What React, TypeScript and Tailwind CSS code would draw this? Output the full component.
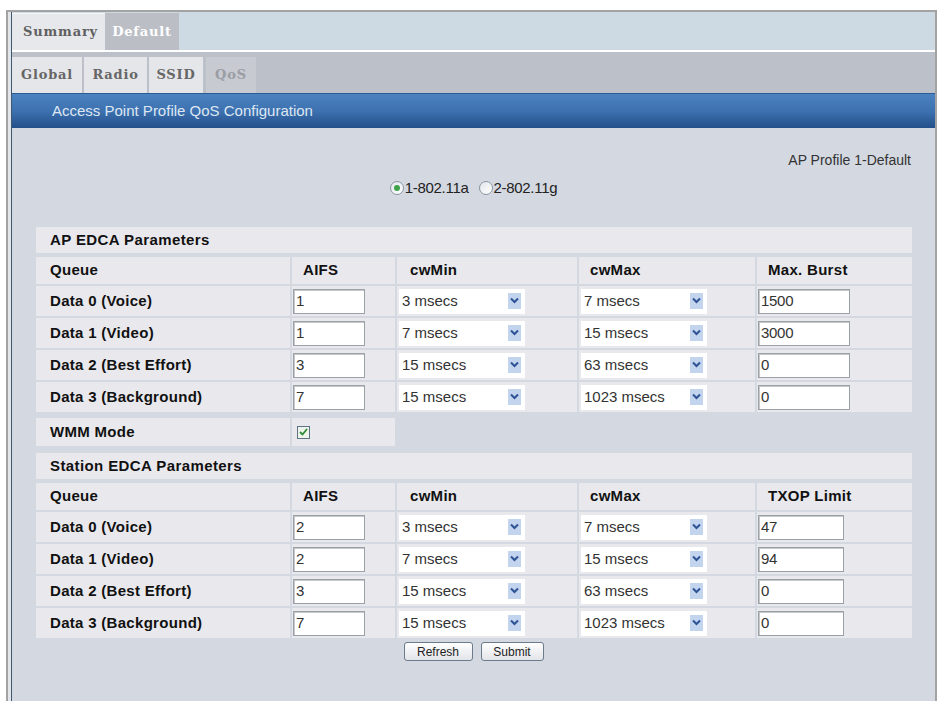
import React from "react";

type Row = { label: string; aifs: string; cwMin: string; cwMax: string; last: string };

const apRows: Row[] = [
  { label: "Data 0 (Voice)", aifs: "1", cwMin: "3 msecs", cwMax: "7 msecs", last: "1500" },
  { label: "Data 1 (Video)", aifs: "1", cwMin: "7 msecs", cwMax: "15 msecs", last: "3000" },
  { label: "Data 2 (Best Effort)", aifs: "3", cwMin: "15 msecs", cwMax: "63 msecs", last: "0" },
  { label: "Data 3 (Background)", aifs: "7", cwMin: "15 msecs", cwMax: "1023 msecs", last: "0" },
];

const stationRows: Row[] = [
  { label: "Data 0 (Voice)", aifs: "2", cwMin: "3 msecs", cwMax: "7 msecs", last: "47" },
  { label: "Data 1 (Video)", aifs: "2", cwMin: "7 msecs", cwMax: "15 msecs", last: "94" },
  { label: "Data 2 (Best Effort)", aifs: "3", cwMin: "15 msecs", cwMax: "63 msecs", last: "0" },
  { label: "Data 3 (Background)", aifs: "7", cwMin: "15 msecs", cwMax: "1023 msecs", last: "0" },
];

const gridCols = "grid grid-cols-[254px_103px_180px_176px_155px] gap-x-[2px]";

function TextBox({ value, width }: { value: string; width: string }) {
  return (
    <div
      className={`${width} h-[25px] ml-[1px] bg-white border border-[#9aa0a8] shadow-[inset_1px_1px_0_#c8c8c8] flex items-center pl-[2px] text-[15px] text-[#333] tracking-[-0.3px]`}
    >
      {value}
    </div>
  );
}

function Select({ value }: { value: string }) {
  return (
    <div className="relative w-[126px] h-[25px] ml-[2px] bg-white flex items-center pl-[3px] text-[15px] text-[#333]">
      {value}
      <div className="absolute right-[4px] top-[4px] w-[13px] h-[16px] bg-[#c3d4ee] flex items-center justify-center">
        <svg width="9" height="7" viewBox="0 0 9 7">
          <path d="M1 1.5 L4.5 5 L8 1.5" fill="none" stroke="#2d5394" strokeWidth="2" />
        </svg>
      </div>
    </div>
  );
}

function Section({ title, lastHeader, rows, lastWidth }: { title: string; lastHeader: string; rows: Row[]; lastWidth: string }) {
  return (
    <div className="flex flex-col">
      <div className="h-[26px] bg-[#e9e9ed] flex items-center pl-[14px] font-bold text-[15px] tracking-[0.4px] text-[#111]">
        {title}
      </div>
      <div className={`${gridCols} mt-[4px] h-[27px] font-bold text-[15px] tracking-[0.3px] text-[#111]`}>
        <div className="bg-[#e9e9ed] flex items-center pl-[14px]">Queue</div>
        <div className="bg-[#e9e9ed] flex items-center pl-[11px]">AIFS</div>
        <div className="bg-[#e9e9ed] flex items-center pl-[13px]">cwMin</div>
        <div className="bg-[#e9e9ed] flex items-center pl-[11px]">cwMax</div>
        <div className="bg-[#e9e9ed] flex items-center pl-[11px]">{lastHeader}</div>
      </div>
      <div className="flex flex-col gap-y-[2px] mt-[2px]">
        {rows.map((r) => (
          <div key={r.label} className={`${gridCols} h-[30px]`}>
            <div className="bg-[#e9e9ed] flex items-center pl-[14px] font-bold text-[15px] tracking-[0.3px] text-[#111]">
              {r.label}
            </div>
            <div className="bg-[#e9e9ed] flex items-center">
              <TextBox value={r.aifs} width="w-[72px]" />
            </div>
            <div className="bg-[#e9e9ed] flex items-center">
              <Select value={r.cwMin} />
            </div>
            <div className="bg-[#e9e9ed] flex items-center">
              <Select value={r.cwMax} />
            </div>
            <div className="bg-[#e9e9ed] flex items-center">
              <TextBox value={r.last} width={lastWidth} />
            </div>
          </div>
        ))}
      </div>
    </div>
  );
}

function Radio({ checked, label }: { checked: boolean; label: string }) {
  return (
    <div className="flex items-center">
      <div className="w-[14px] h-[14px] rounded-full border border-[#8a96a3] bg-gradient-to-br from-[#e2e6ea] to-white flex items-center justify-center">
        {checked && <div className="w-[6px] h-[6px] rounded-full bg-[#3fa24a]" />}
      </div>
      <span className="ml-[1px] text-[15px] text-[#222] tracking-[-0.3px]">{label}</span>
    </div>
  );
}

export default function App() {
  return (
    <div className="w-[942px] h-[701px] bg-white pt-[10px] pl-[6px] overflow-hidden font-['Liberation_Sans',Arial,sans-serif]">
      <div className="w-[931px] h-[691px] border-x-2 border-t-2 border-[#a3a3a3] bg-[#e2e6ea] pl-[3px] flex">
        <div className="flex-1 border-l border-[#40586e] flex flex-col">
          {/* top tabs */}
          <div className="h-[40px] bg-[#cdd9e3] border-b-2 border-white flex items-end font-['DejaVu_Serif',serif] font-bold text-[13px] tracking-[0.8px]">
            <div className="w-[93px] h-[37px] bg-[#e7e8ec] border-t border-[#f7f7f7] flex items-center justify-center pl-[4px] text-[#606060]">
              Summary
            </div>
            <div className="w-[74px] h-[37px] bg-[#bbbec5] flex items-center justify-center text-white">
              Default
            </div>
          </div>
          {/* sub tabs */}
          <div className="h-[41px] bg-[#bcc1c9] flex items-end gap-x-[2px] font-['DejaVu_Serif',serif] font-bold text-[13px] tracking-[0.8px]">
            <div className="w-[70px] h-[36px] bg-[#e5e6ea] flex items-center justify-center text-[#666]">Global</div>
            <div className="w-[63px] h-[36px] bg-[#e5e6ea] flex items-center justify-center text-[#666]">Radio</div>
            <div className="w-[54px] h-[36px] bg-[#e5e6ea] flex items-center justify-center text-[#666]">SSID</div>
            <div className="w-[50px] h-[36px] ml-[1px] bg-[#c7cad1] flex items-center justify-center text-[#9a9da4]">
              QoS
            </div>
          </div>
          {/* blue title bar */}
          <div className="h-[35px] border-t border-[#2b5b92] bg-gradient-to-b from-[#4c82c0] via-[#3d71b0] to-[#23508a] flex items-center pl-[40px] text-[15px] text-[#dde7f2]">
            Access Point Profile QoS Configuration
          </div>
          {/* body */}
          <div className="flex-1 bg-[#d4d8e1] flex flex-col">
            <div className="mt-[22px] h-[20px] flex items-center justify-end pr-[24px] text-[14px] text-[#333]">
              AP Profile 1-Default
            </div>
            <div className="mt-[8px] h-[20px] flex items-center justify-center gap-x-[10px]">
              <Radio checked label="1-802.11a" />
              <Radio checked={false} label="2-802.11g" />
            </div>
            <div className="mt-[29px] ml-[24px] w-[876px] flex flex-col">
              <Section title="AP EDCA Parameters" lastHeader="Max. Burst" rows={apRows} lastWidth="w-[92px]" />
              <div className="mt-[6px] h-[28px] flex gap-x-[2px]">
                <div className="w-[254px] bg-[#e9e9ed] flex items-center pl-[14px] font-bold text-[15px] tracking-[0.3px] text-[#111]">
                  WMM Mode
                </div>
                <div className="w-[103px] bg-[#e9e9ed] flex items-center pl-[5px]">
                  <div className="w-[13px] h-[13px] border border-[#5d7487] bg-[#eef3ec] flex items-center justify-center">
                    <svg width="9" height="8" viewBox="0 0 9 8">
                      <path d="M1 4 L3.5 6.5 L8 1" fill="none" stroke="#2e8a35" strokeWidth="1.8" />
                    </svg>
                  </div>
                </div>
              </div>
              <div className="mt-[7px]">
                <Section title="Station EDCA Parameters" lastHeader="TXOP Limit" rows={stationRows} lastWidth="w-[86px]" />
              </div>
            </div>
            <div className="mt-[4px] flex justify-center gap-x-[8px]">
              <button className="w-[69px] h-[19px] rounded-[3px] border border-[#6c7b8b] bg-gradient-to-b from-white to-[#e3e4e8] text-[12px] text-[#222] leading-none">
                Refresh
              </button>
              <button className="w-[63px] h-[19px] rounded-[3px] border border-[#6c7b8b] bg-gradient-to-b from-white to-[#e3e4e8] text-[12px] text-[#222] leading-none">
                Submit
              </button>
            </div>
          </div>
        </div>
      </div>
    </div>
  );
}
